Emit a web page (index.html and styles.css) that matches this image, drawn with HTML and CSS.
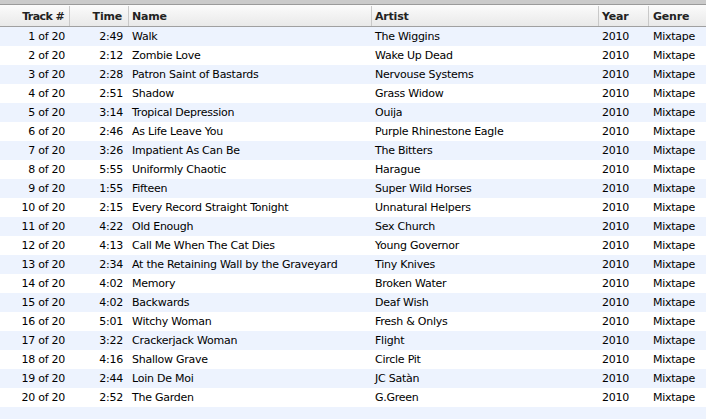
FILE: index.html
```html
<!DOCTYPE html>
<html>
<head>
<meta charset="utf-8">
<link rel="stylesheet" href="styles.css">
</head>
<body>
<div class="list">
  <div class="topband"></div>
  <div class="row head">
    <div class="c track">Track #</div>
    <div class="c time">Time</div>
    <div class="c name">Name</div>
    <div class="c artist">Artist</div>
    <div class="c year">Year</div>
    <div class="c genre">Genre</div>
  </div>
  <div id="rows"></div>
  <div class="row odd filler"></div>
</div>
<script src="app.js"></script>
</body>
</html>
```
FILE: styles.css
```css
* { box-sizing: border-box; }
html, body { margin: 0; padding: 0; background: #fff; }
body { font-family: "DejaVu Sans", "Liberation Sans", sans-serif; font-size: 11px; color: #000; overflow: hidden; }
.list { width: 706px; height: 419px; overflow: hidden; }
.topband { background: #cacaca; border-bottom: 1px solid #9a9a9a; height: 5px; }
.row { display: flex; height: 19px; align-items: center; white-space: nowrap; letter-spacing: -0.25px; }
.row.odd { background: #edf3fe; }
.head { height: 22px; padding-top: 1px; background: linear-gradient(#fbfbfb, #e9e9e9); border-bottom: 1px solid #a0a0a0; font-weight: bold; color: #222; letter-spacing: -0.2px; }
.head .c { height: 100%; display: flex; align-items: center; border-right: 1px solid #c9c9c9; }
.head .c.genre { border-right: none; }
.head .track { letter-spacing: -0.6px; }
.c { overflow: hidden; }
.track { width: 70px; justify-content: flex-end; text-align: right; padding-right: 5px; }
.time { width: 59px; justify-content: flex-end; text-align: right; padding-right: 6px; }
.name { width: 243px; padding-left: 3px; }
.artist { width: 227px; padding-left: 3px; }
.year { width: 50px; padding-left: 3px; }
.genre { flex: 1; padding-left: 4px; }
.filler { height: 20px; }
```
FILE: app.js
```js
const data = [
["1","2:49","Walk","The Wiggins"],
["2","2:12","Zombie Love","Wake Up Dead"],
["3","2:28","Patron Saint of Bastards","Nervouse Systems"],
["4","2:51","Shadow","Grass Widow"],
["5","3:14","Tropical Depression","Ouija"],
["6","2:46","As Life Leave You","Purple Rhinestone Eagle"],
["7","3:26","Impatient As Can Be","The Bitters"],
["8","5:55","Uniformly Chaotic","Harague"],
["9","1:55","Fifteen","Super Wild Horses"],
["10","2:15","Every Record Straight Tonight","Unnatural Helpers"],
["11","4:22","Old Enough","Sex Church"],
["12","4:13","Call Me When The Cat Dies","Young Governor"],
["13","2:34","At the Retaining Wall by the Graveyard","Tiny Knives"],
["14","4:02","Memory","Broken Water"],
["15","4:02","Backwards","Deaf Wish"],
["16","5:01","Witchy Woman","Fresh & Onlys"],
["17","3:22","Crackerjack Woman","Flight"],
["18","4:16","Shallow Grave","Circle Pit"],
["19","2:44","Loin De Moi","JC Satàn"],
["20","2:52","The Garden","G.Green"]
];
const rows = document.getElementById('rows');
data.forEach((d, i) => {
  const r = document.createElement('div');
  r.className = 'row' + (i % 2 === 0 ? ' odd' : '');
  const cells = [['track', d[0] + ' of 20'], ['time', d[1]], ['name', d[2]], ['artist', d[3]], ['year', '2010'], ['genre', 'Mixtape']];
  cells.forEach(([cls, txt]) => {
    const c = document.createElement('div');
    c.className = 'c ' + cls;
    c.textContent = txt;
    r.appendChild(c);
  });
  rows.appendChild(r);
});
```
